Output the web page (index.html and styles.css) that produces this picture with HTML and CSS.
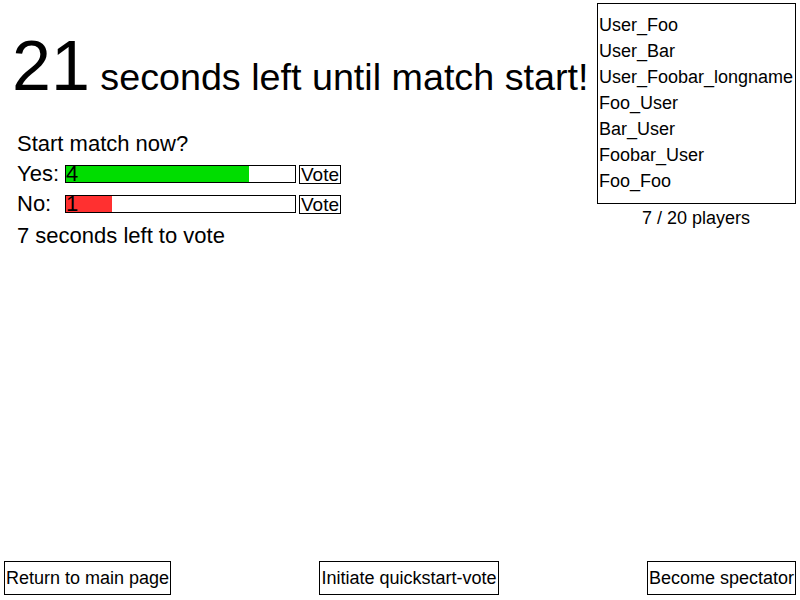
FILE: index.html
```html
<!DOCTYPE html>
<html>
<head>
<meta charset="utf-8">
<link rel="stylesheet" href="styles.css">
</head>
<body>
<div class="page">
  <div class="top">
    <div class="main">
      <h1 class="title"><span class="count">21</span> seconds left until match start!</h1>
      <div class="vote">
        <div class="question">Start match now?</div>
        <div class="row">
          <span class="label">Yes:</span>
          <div class="bar"><div class="fill yes" style="width:80%"></div><span class="num">4</span></div>
          <button class="votebtn">Vote</button>
        </div>
        <div class="row">
          <span class="label">No:</span>
          <div class="bar"><div class="fill no" style="width:20%"></div><span class="num">1</span></div>
          <button class="votebtn">Vote</button>
        </div>
        <div class="timer">7 seconds left to vote</div>
      </div>
    </div>
    <div class="players">
      <ul class="list">
        <li>User_Foo</li>
        <li>User_Bar</li>
        <li>User_Foobar_longname</li>
        <li>Foo_User</li>
        <li>Bar_User</li>
        <li>Foobar_User</li>
        <li>Foo_Foo</li>
      </ul>
      <div class="pcount">7 / 20 players</div>
    </div>
  </div>
  <div class="footer">
    <button class="btn">Return to main page</button>
    <button class="btn">Initiate quickstart-vote</button>
    <button class="btn">Become spectator</button>
  </div>
</div>
</body>
</html>
```
FILE: styles.css
```css
html, body {
  margin: 0;
  padding: 0;
  background: #fff;
  color: #000;
  font-family: "Liberation Sans", Arial, sans-serif;
}
.page {
  height: 600px;
  display: flex;
  flex-direction: column;
  box-sizing: border-box;
  padding: 3px 4px 5px 4px;
}
.top {
  display: flex;
  justify-content: space-between;
  align-items: flex-start;
}
.main {
  padding-left: 8px;
}
.title {
  margin: 28px 0 0 0;
  font-weight: normal;
  font-size: 37.7px;
  line-height: 70px;
  white-space: nowrap;
}
.count {
  font-size: 70px;
}
.vote {
  padding-left: 5px;
  margin-top: 16px;
}
.question {
  font-size: 22px;
  line-height: 31px;
}
.row {
  display: flex;
  align-items: center;
  height: 30px;
}
.label {
  font-size: 22px;
  width: 48px;
}
.bar {
  position: relative;
  width: 229px;
  height: 16px;
  border: 1px solid #000;
}
.fill {
  height: 100%;
}
.fill.yes { background: #00dd00; }
.fill.no { background: #ff3030; }
.num {
  position: absolute;
  left: 0;
  top: -4px;
  font-size: 22px;
  line-height: 24px;
}
.votebtn {
  margin-left: 3px;
  font-family: inherit;
  font-size: 19px;
  line-height: 17px;
  padding: 0 1px;
  border: 1px solid #000;
  background: #fff;
  color: #000;
  height: 19px;
}
.timer {
  font-size: 22px;
  line-height: 30px;
  margin-top: 2px;
}
.players {
  width: 200px;
  display: flex;
  flex-direction: column;
  align-items: center;
}
.list {
  list-style: none;
  margin: 0;
  padding: 8px 0 9px 1px;
  border: 1px solid #000;
  box-sizing: border-box;
  width: 199px;
  margin-left: 1px;
  align-self: flex-start;
}
.list li {
  font-size: 18px;
  line-height: 26px;
}
.pcount {
  font-size: 18px;
  line-height: 26px;
  margin-top: 1px;
}
.footer {
  margin-top: auto;
  display: flex;
  justify-content: space-between;
}
.btn {
  font-family: inherit;
  font-size: 18px;
  border: 1px solid #000;
  background: #fff;
  color: #000;
  height: 34px;
  padding: 0 1px;
}
```
